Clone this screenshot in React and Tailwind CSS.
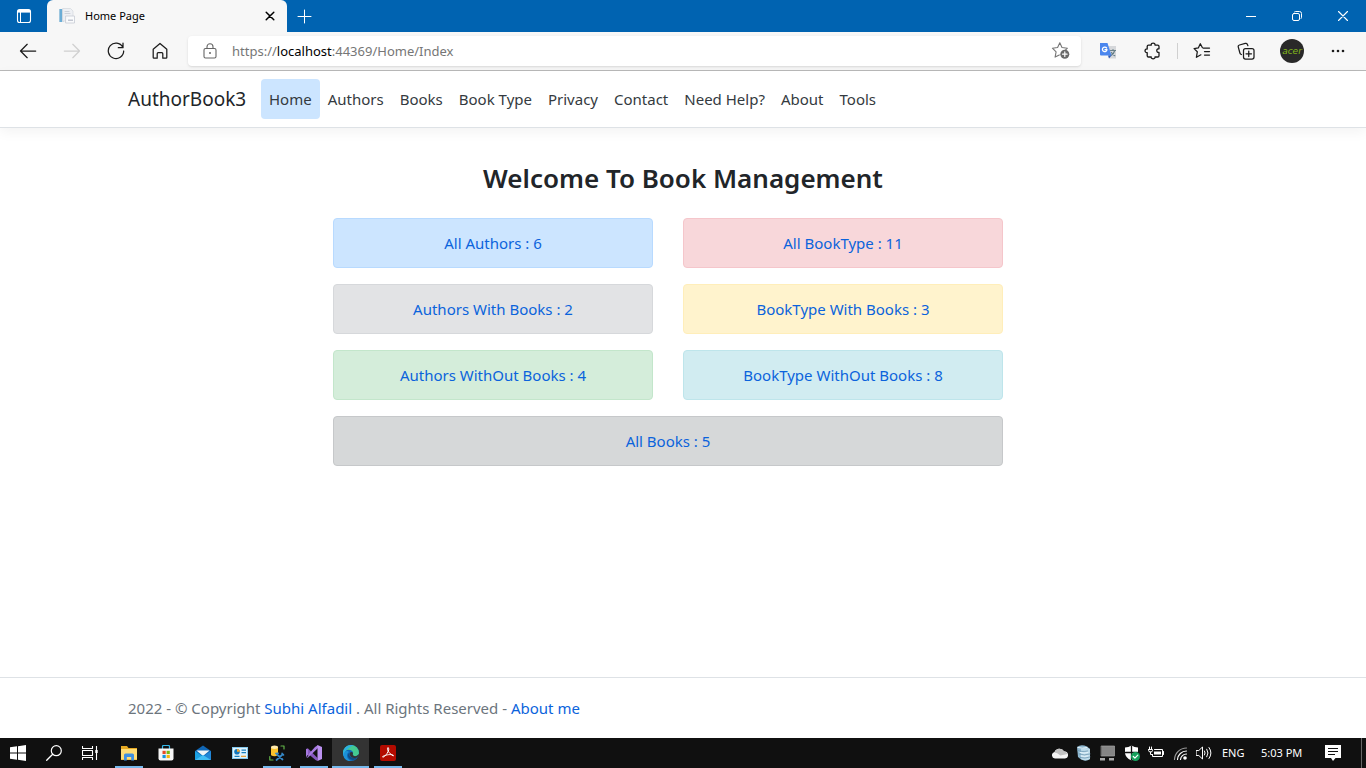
import React from "react";

const navItems = ["Home", "Authors", "Books", "Book Type", "Privacy", "Contact", "Need Help?", "About", "Tools"];

const cards = [
  { label: "All Authors : 6", tone: "bg-[#cce5ff] border-[#b8daff]" },
  { label: "All BookType : 11", tone: "bg-[#f8d7da] border-[#f5c6cb]" },
  { label: "Authors With Books : 2", tone: "bg-[#e2e3e5] border-[#d6d8db]" },
  { label: "BookType With Books : 3", tone: "bg-[#fff3cd] border-[#ffeeba]" },
  { label: "Authors WithOut Books : 4", tone: "bg-[#d4edda] border-[#c3e6cb]" },
  { label: "BookType WithOut Books : 8", tone: "bg-[#d1ecf1] border-[#bee5eb]" },
  { label: "All Books : 5", tone: "bg-[#d6d8d9] border-[#c6c8ca] col-span-2" },
];

function Icon({ size = 16, children, className = "" }) {
  return (
    <svg
      width={size}
      height={size}
      viewBox={`0 0 ${size} ${size}`}
      fill="none"
      stroke="currentColor"
      strokeLinecap="round"
      strokeLinejoin="round"
      className={`shrink-0 ${className}`}
      aria-hidden="true"
    >
      {children}
    </svg>
  );
}

function ToolButton({ label, children, className = "" }) {
  return (
    <button type="button" aria-label={label} className={`flex h-8 w-11 shrink-0 items-center justify-center ${className}`}>
      {children}
    </button>
  );
}

function TabStrip() {
  return (
    <div className="flex h-8 bg-[#0063b1] text-white">
      <button type="button" aria-label="Tab actions" className="flex w-[47px] shrink-0 items-center justify-center">
        <Icon>
          <rect x="1.5" y="1.5" width="13" height="13" rx="2" strokeWidth="1.1" />
          <path d="M2 2h12v2.600H2z" fill="currentColor" stroke="none" />
          <path d="M4.500 4v10" strokeLinecap="butt" />
        </Icon>
      </button>
      <div className="flex w-60 shrink-0 items-center rounded-t-md bg-[#f7f7f7] pl-3 text-black">
        <Icon>
          <path d="M0 1h5v13H0z" fill="#cfdfe8" stroke="none" />
          <path d="M0.500 1h2.500v13H.5z" fill="#6badd6" stroke="none" />
          <path d="M4 .5h7.500l2.500 2.500v10H4z" fill="#eef0f4" stroke="#d3d7dd" strokeWidth=".7" />
          <path d="M6 3.500h4M6 5.500h5" stroke="#c4cad3" strokeWidth=".8" />
          <path d="M7 8h8.500v7H7z" fill="#fafbfc" stroke="#c6cbd4" strokeWidth=".8" />
          <path d="M9 11.500h5v1.500H9z" fill="#c3c7d2" stroke="none" />
        </Icon>
        <span className="ml-[10px] grow text-[11px] leading-4">Home Page</span>
        <button type="button" aria-label="Close tab" className="mr-2 flex size-[18px] items-center justify-center">
          <Icon size={10}>
            <path d="M1.200 1.200l7.600 7.600M8.800 1.200L1.200 8.800" strokeWidth="1.500" />
          </Icon>
        </button>
      </div>
      <button type="button" aria-label="New tab" className="flex w-[35px] items-center justify-center">
        <Icon size={15}>
          <path d="M7.500 1v13M1 7.500h13" />
        </Icon>
      </button>
      <div className="ml-auto flex">
        <button type="button" aria-label="Minimize" className="flex w-[46px] items-center justify-center">
          <Icon size={10}>
            <path d="M0 5.500h10" strokeLinecap="butt" />
          </Icon>
        </button>
        <button type="button" aria-label="Restore" className="flex w-[46px] items-center justify-center">
          <Icon size={10}>
            <rect x=".5" y="2.500" width="7" height="7" rx="1.500" />
            <path d="M2.500 .9Q3 .5 3.700 .5H7.500Q9.500 .5 9.500 2.500V6.300Q9.500 7 9.100 7.500" />
          </Icon>
        </button>
        <button type="button" aria-label="Close window" className="flex w-[46px] items-center justify-center">
          <Icon size={10}>
            <path d="M.5 .5l9 9M9.500 .5l-9 9" strokeWidth="1.100" />
          </Icon>
        </button>
      </div>
    </div>
  );
}

function Toolbar() {
  return (
    <div className="flex h-[39px] items-center border-b border-[#b9b9b9] bg-[#f7f7f7] pl-[6px] text-[#1b1b1b]">
      <ToolButton label="Back">
        <Icon size={18}>
          <path d="M16.700 9H1.500M8.200 2.300L1.500 9l6.700 6.700" strokeWidth="1.250" />
        </Icon>
      </ToolButton>
      <ToolButton label="Forward" className="text-[#d0d0d0]">
        <Icon size={18}>
          <path d="M1.300 9h15.200M9.800 2.300L16.500 9l-6.700 6.700" strokeWidth="1.250" />
        </Icon>
      </ToolButton>
      <ToolButton label="Refresh">
        <Icon size={18}>
          <path d="M15.800 5.200A7.700 7.700 0 1 0 16.700 9M16 1v4.700h-4.700" strokeWidth="1.250" />
        </Icon>
      </ToolButton>
      <ToolButton label="Home">
        <Icon size={18}>
          <path d="M2.200 7.200L9 1.500l6.800 5.700v8.300q0 .7-.7.700h-3.300v-4.500q0-1-1-1H7.200q-1 0-1 1v4.500H2.900q-.7 0-.7-.7z" strokeWidth="1.250" />
        </Icon>
      </ToolButton>
      <div className="ml-[6px] flex h-[30px] min-w-0 grow items-center rounded bg-white pr-[10px] pl-[14px] shadow-sm">
        <Icon size={16} className="text-[#666]">
          <rect x="2" y="5.500" width="12" height="9.500" rx="1.500" strokeWidth="1.100" />
          <path d="M5 5.500V3.800a3 3 0 0 1 6 0v1.700" strokeWidth="1.100" />
          <circle cx="8" cy="10" r="1" fill="currentColor" stroke="none" />
        </Icon>
        <a href="#address" className="ml-[14px] grow text-[13px] leading-5 text-[#767676]">
          https://<span className="text-black">localhost</span>:44369/Home/Index
        </a>
        <button type="button" aria-label="Add to favorites" className="text-[#767676]">
          <Icon size={20}>
            <path d="M8.800 1.800l2.200 4.700 5.400.7-2 2M8.800 1.800L6.600 6.500l-5.200.7 3.700 3.700-1 5.200 4.200-2.200" strokeWidth="1.100" />
            <circle cx="13.800" cy="13.200" r="4.500" fill="#6a6a6a" stroke="none" />
            <path d="M11.500 13.200h4.600M13.800 10.900v4.600" stroke="white" strokeWidth="1.200" />
          </Icon>
        </button>
      </div>
      <ToolButton label="Translate" className="ml-[5px]">
        <Icon size={16}>
          <path d="M7 3h9v12.500H9.500z" fill="#d5d7da" stroke="none" />
          <path d="M10.500 7.500h5M13 6.500v1M14.500 8c-.5 2-2 3.700-3.500 4.500M11.500 9.500c.8 1.500 1.800 2.500 3.300 3.200" stroke="#667f88" strokeWidth="1.200" />
          <path d="M0 0h7.500l4 12.500H1q-1 0-1-1z" fill="#4a86ee" stroke="none" />
          <path d="M8 12.500h3.500L9 15.500z" fill="#2b58b7" stroke="none" />
          <path d="M6.600 5A2.300 2.300 0 1 0 7 6.700H5" stroke="white" strokeWidth="1.300" />
        </Icon>
      </ToolButton>
      <ToolButton label="Extensions" className="ml-px">
        <Icon size={18}>
          <path d="M4.500 3.200h2.700c-.4-2.900 4.200-2.900 3.800 0h2.700q1.300 0 1.300 1.300v2.300c-3-.6-3 4.100 0 3.500v3.400q0 1.300-1.300 1.300H11c.6 2.400-4.400 2.400-3.800 0H4.500q-1.300 0-1.300-1.300v-3.100c-2.900.4-2.900-4 0-3.600V4.500q0-1.300 1.300-1.300z" strokeWidth="1.300" />
        </Icon>
      </ToolButton>
      <span className="mx-[2px] h-4 w-px bg-[#d0d0d0]" />
      <ToolButton label="Favorites">
        <Icon size={18}>
          <path d="M10.200 6h6.300M11.500 9.500h5M11.500 13h5M9.300 5.500L7.300 1.700 5.300 5.900l-4.200.7 3.200 3.200-.9 5.500 4.500-2.500" strokeWidth="1.250" />
        </Icon>
      </ToolButton>
      <ToolButton label="Collections">
        <Icon size={18}>
          <rect x="6.500" y="6.500" width="10.500" height="10.500" rx="2" strokeWidth="1.250" />
          <path d="M11.750 9v5.500M9 11.750h5.500" strokeWidth="1.250" />
          <path d="M4.500 12.500Q3.200 12.300 2.900 11L1.300 5.200Q.8 3.500 2.500 3l5.700-1.600q1.600-.4 2.200 1l.5 1.300" strokeWidth="1.250" />
        </Icon>
      </ToolButton>
      <ToolButton label="Profile" className="ml-[2px]">
        <span className="flex size-6 items-center justify-center rounded-full bg-[#292929] font-['DejaVu_Sans',sans-serif] text-[9px] leading-3 text-[#83b81a] italic">
          acer
        </span>
      </ToolButton>
      <ToolButton label="Settings and more" className="mr-[6px] ml-[2px]">
        <Icon size={16}>
          <g fill="currentColor" stroke="none">
            <circle cx="3" cy="8" r="1.300" />
            <circle cx="8" cy="8" r="1.300" />
            <circle cx="13" cy="8" r="1.300" />
          </g>
        </Icon>
      </ToolButton>
    </div>
  );
}

function SiteHeader() {
  return (
    <header className="border-b border-[#dee2e6] bg-white shadow-[0_4px_12px_rgba(0,0,0,0.05)]">
      <nav className="mx-auto flex max-w-[1110px] items-center py-2">
        <a href="#brand" className="w-[133px] shrink-0 text-[19px] leading-8 text-[#212529]">AuthorBook3</a>
        <ul className="flex">
          {navItems.map((item) => (
            <li key={item}>
              <a
                href="#nav"
                className={`block rounded px-2 py-2 text-[15px] leading-6 whitespace-nowrap text-[#343a40] ${item === "Home" ? "bg-[#cce5ff]" : ""}`}
              >
                {item}
              </a>
            </li>
          ))}
        </ul>
      </nav>
    </header>
  );
}

function Dashboard() {
  return (
    <main className="mx-auto w-full max-w-[1110px] grow pt-8">
      <h1 className="text-center text-[26px] leading-9 font-semibold text-[#212529]">Welcome To Book Management</h1>
      <div className="mt-[22px] grid grid-cols-2 gap-x-[30px] gap-y-4 pr-[235px] pl-[205px] text-center text-[15px] leading-6">
        {cards.map((card) => (
          <a key={card.label} href="#list" className={`rounded border py-3 text-[#0b63dc] ${card.tone}`}>
            {card.label}
          </a>
        ))}
      </div>
    </main>
  );
}

function SiteFooter() {
  return (
    <footer className="border-t border-[#dee2e6] bg-white">
      <p className="mx-auto h-[60px] max-w-[1110px] text-[15px] leading-[60px] text-[#6c757d]">
        2022 - © Copyright <a href="#author" className="text-[#0b63dc]">Subhi Alfadil</a> . All Rights Reserved -{" "}
        <a href="#about" className="text-[#0b63dc]">About me</a>
      </p>
    </footer>
  );
}

const apps = [
  {
    name: "File Explorer",
    state: "open",
    art: (
      <g stroke="none">
        <path d="M0 1h6l1.500 2H16v12H0z" fill="#e6a922" />
        <path d="M0 4h16v10.500H0z" fill="#ffdc76" />
        <path d="M3 15.500V10q0-1.500 1.500-1.500h7Q13 8.500 13 10v5.500h-2.800V12H5.800v3.500z" fill="#3f8fe0" />
      </g>
    ),
  },
  {
    name: "Store",
    art: (
      <g stroke="none">
        <path d="M4.500 4V1.500Q4.500.5 5.500.5h5q1 0 1 1V4" stroke="#35b8e8" strokeWidth="1.200" />
        <path d="M.5 3.500h15v10q0 2-2 2h-11q-2 0-2-2z" fill="#f6f6f6" />
        <path d="M4.500 5.800h3.200V9H4.500z" fill="#e84b25" />
        <path d="M8.600 5.800h3.200V9H8.600z" fill="#78b913" />
        <path d="M4.500 9.900h3.200v3.200H4.500z" fill="#1593df" />
        <path d="M8.600 9.900h3.200v3.200H8.600z" fill="#f8b60c" />
      </g>
    ),
  },
  {
    name: "Mail",
    art: (
      <g stroke="none">
        <path d="M0 6l8-5.500L16 6v9H0z" fill="#1066b4" />
        <path d="M1.500 5.500h13L8 11z" fill="#f2f5f8" />
        <path d="M0 6l8 5.500L0 15z" fill="#1ba0e2" />
        <path d="M16 6l-8 5.500 8 3.500z" fill="#2286d6" />
        <path d="M0 15l8-5 8 5z" fill="#42bdf4" />
      </g>
    ),
  },
  {
    name: "Control Panel",
    art: (
      <g stroke="none">
        <path d="M0 2h16v12H0z" fill="#86caed" />
        <path d="M1 3h14v10H1z" fill="#dff3fd" />
        <circle cx="5" cy="6.800" r="2.800" fill="#1277bd" />
        <path d="M5 6.800V4a2.800 2.800 0 0 1 2.800 2.800z" fill="#f4a62b" />
        <path d="M9.500 4.500h4.500v1.300H9.500zM9.500 7h4.500v1.300H9.500zM2.500 10.700h5V12h-5z" fill="#1980bd" />
        <path d="M9 10.700h5V12H9z" fill="#e6a13a" />
      </g>
    ),
  },
  {
    name: "SQL Server Tools",
    state: "open",
    art: (
      <g>
        <path d="M2 2.200v8q3.500 2.200 7 0v-8z" fill="#f9c22c" stroke="none" />
        <ellipse cx="5.500" cy="2.200" rx="3.500" ry="1.700" fill="#ffe9ac" stroke="none" />
        <path d="M12 1h3v3M.8 11.500V15h3.200" stroke="#62b349" strokeWidth="1.200" />
        <path d="M8 9.500l5.500 5M13.500 9.500L7.500 15" stroke="#3689c9" strokeWidth="1.700" />
        <path d="M6.800 8.500l2.500-.3M13 8.200l1.600 1.700" stroke="#3689c9" strokeWidth="1.500" />
      </g>
    ),
  },
  {
    name: "Visual Studio",
    state: "open",
    art: (
      <g stroke="none">
        <path d="M0 4l1.800-.8L11.500 13V16L9.500 15 0 7z" fill="#8556bd" />
        <path d="M0 12V4l2.200.5v7L0 12zM1.800 12.800L12 3V0l-3 2L0 12z" fill="#a77ae0" />
        <path d="M11.500 0L16 2v12l-4.500 2z" fill="#bb91f0" />
      </g>
    ),
  },
  {
    name: "Microsoft Edge",
    state: "active",
    art: (
      <g stroke="none">
        <circle cx="8" cy="8" r="8" fill="#0f68b7" />
        <path d="M0 8a8 8 0 0 1 16 0c0 3-3.500 4-5.800 2.500C9 9.800 10.500 9 10 7.500 9 4 3 3.500 0 8z" fill="#45ca91" />
        <path d="M0 8c.5-5 5-9 10.500-7.700C6 2.500 2 5 .7 11.300A8 8 0 0 1 0 8z" fill="#2cafe3" />
        <path d="M6 7c-4 2.200-1.500 8.500 3 8.900C4.500 17 .7 14 .5 10.500.2 7 4 4.500 6 7z" fill="#1c91d9" />
        <path d="M6.300 8C5.500 12 10 14 14.500 12.200 11 17.500 4.500 14 5 10q.2-1.300 1.300-2z" fill="#114b83" />
        <path d="M7 7.800q1.200-1.300 2.700-.2c.8 1-.5 2 .5 2.900C12 12 14.500 10.800 16 9c-.2 3-2.500 4-4.500 4-3.500 0-5.500-3-4.500-5.200z" fill="#333" />
      </g>
    ),
  },
  {
    name: "Acrobat",
    state: "open",
    art: (
      <g>
        <rect width="16" height="16" rx="2" fill="#b30b00" stroke="none" />
        <path d="M8 3c-2 0 .2 5 5.300 8 1.200-2-6.500-2-10.600.5-.8 2 4-.5 6-6.500C9 3.500 8.700 3 8 3z" stroke="white" strokeWidth="1" />
      </g>
    ),
  },
];

function TrayIcon({ label, children }) {
  return (
    <button type="button" aria-label={label} className="flex w-6 items-center justify-center">
      <Icon>{children}</Icon>
    </button>
  );
}

function Taskbar() {
  return (
    <div className="flex h-[30px] bg-[#101010] text-white">
      <button type="button" aria-label="Start" className="flex w-9 items-center justify-center">
        <Icon>
          <path d="M0 2.300L7 1.300v6.200H0zM8 1.200L16 0v7.500H8zM0 8.500h7v6.200l-7-1zM8 8.500h8V16l-8-1.200z" fill="currentColor" stroke="none" />
        </Icon>
      </button>
      <button type="button" aria-label="Search" className="flex w-9 items-center justify-center">
        <Icon>
          <circle cx="10.300" cy="5.700" r="5" strokeWidth="1.200" />
          <path d="M6.700 9.300L.7 15.300" strokeWidth="1.300" />
        </Icon>
      </button>
      <button type="button" aria-label="Task view" className="mr-[2px] flex w-9 items-center justify-center">
        <Icon>
          <path d="M.5 1v2.500h10V1M.5 15v-2.500h10V15M.5 5.500h10v5H.5zM14.500 1v14" strokeLinecap="butt" strokeWidth="1.100" />
          <path d="M13.300 5h2.400v3h-2.400z" fill="currentColor" stroke="none" />
        </Icon>
      </button>
      {apps.map((app) => (
        <button
          key={app.name}
          type="button"
          aria-label={app.name}
          className={`flex w-[37px] flex-col items-center ${app.state === "active" ? "bg-[#333333]" : ""}`}
        >
          <span className="flex h-7 items-center pt-[2px]">
            <Icon>{app.art}</Icon>
          </span>
          {app.state && <span className={`h-[2px] bg-[#76b9ed] ${app.state === "active" ? "w-full" : "w-7"}`} />}
        </button>
      ))}
      <div className="ml-auto flex">
        <TrayIcon label="OneDrive">
          <path d="M3 13.500a3.300 3.300 0 0 1-.5-6.500A5.300 5.300 0 0 1 12 6.500a3.500 3.500 0 0 1 1 7z" fill="#f4f4f4" stroke="none" />
          <path d="M2.500 7.500A5.300 5.300 0 0 1 12 6q2.500.5 3.500 3L8.500 10.500Q5 7.500 2.500 7.500z" fill="#c2c2c2" stroke="none" />
        </TrayIcon>
        <TrayIcon label="Database">
          <path d="M1 2q4-3 10-.5l3 2.500v10q-4 3-9 .5L2 12z" fill="#8fb8d0" stroke="none" />
          <path d="M5 4q5-2 9 0v10q-5 2.500-9 0z" fill="#bddbea" stroke="none" />
          <path d="M1.500 5q4 2.500 10 1M3 9q5 2 11 0M4 12.500q5 1.500 10-.5" stroke="#7199b3" strokeWidth=".8" />
          <path d="M2 2.500q4 1.500 9 0M4 7.500q4 1.500 8 0M5 11q4 1 7 0" stroke="#e5f3fa" />
        </TrayIcon>
        <TrayIcon label="Display">
          <path d="M1.500 1h13v10h-13z" fill="#858585" stroke="#a5a5a5" strokeWidth=".7" />
          <path d="M0 13h5v2.500H0zM9 13h5v2.500H9z" fill="#aaa" stroke="none" />
        </TrayIcon>
        <TrayIcon label="Security">
          <path d="M7.500.5q3 2 6.500 2v5q0 5-6.500 8-6.500-3-6.500-8v-5q3.500 0 6.500-2z" fill="white" stroke="none" />
          <path d="M7.500 1v14M1.500 7.500h12" stroke="#111" strokeWidth="1.300" />
          <circle cx="11.500" cy="11.500" r="4.500" fill="#16a05c" stroke="none" />
          <path d="M9.300 11.500l1.600 1.600 2.900-3" stroke="white" strokeWidth="1.200" />
        </TrayIcon>
        <TrayIcon label="Battery">
          <path d="M6.500 4.500h8v7h-10V9.500M15.500 6.500v3M1.500 2v2M3.500 2v2M.5 4.500h4v1.200q0 1.300-2 1.300T.5 5.700zM2.500 7v2.500h2" />
          <path d="M6 6.500h7v3H6z" fill="currentColor" stroke="none" />
        </TrayIcon>
        <TrayIcon label="Network">
          <path d="M2.500 14.500A12 12 0 0 1 14.500 3" stroke="#999" strokeWidth="1.200" />
          <path d="M5.500 14.500A9 9 0 0 1 14.500 6M8.500 14.500A6 6 0 0 1 14.500 9" strokeWidth="1.200" />
          <circle cx="13" cy="13" r="1.800" fill="currentColor" stroke="none" />
        </TrayIcon>
        <TrayIcon label="Volume">
          <path d="M.5 5.500h2.300L6.500 2v12l-3.700-3.500H.5zM8.500 6q1.300 2 0 4M10.800 4.200q2.500 3.800 0 7.600M13 2.500q4 5.500 0 11" />
        </TrayIcon>
        <button type="button" className="ml-[6px] w-6 text-left text-[11px] leading-[30px] whitespace-nowrap">ENG</button>
        <button type="button" className="ml-[15px] w-[43px] text-left text-[11px] leading-[30px] whitespace-nowrap">5:03 PM</button>
        <button type="button" aria-label="Notifications" className="ml-[11px] flex w-9 items-center justify-center">
          <Icon>
            <path d="M0 0h16v13h-5.500L8 16l-2-3H0z" fill="white" stroke="none" />
            <path d="M3 3.500h10M3 6.500h10M3 9.500h7" stroke="#111" strokeLinecap="butt" />
          </Icon>
        </button>
        <button type="button" aria-label="Show desktop" className="ml-[10px] w-[5px] border-l border-[#666]" />
      </div>
    </div>
  );
}

export default function App() {
  return (
    <div className="flex min-h-screen flex-col bg-white font-['Noto_Sans','Open_Sans',sans-serif]">
      <TabStrip />
      <Toolbar />
      <SiteHeader />
      <Dashboard />
      <SiteFooter />
      <Taskbar />
    </div>
  );
}
